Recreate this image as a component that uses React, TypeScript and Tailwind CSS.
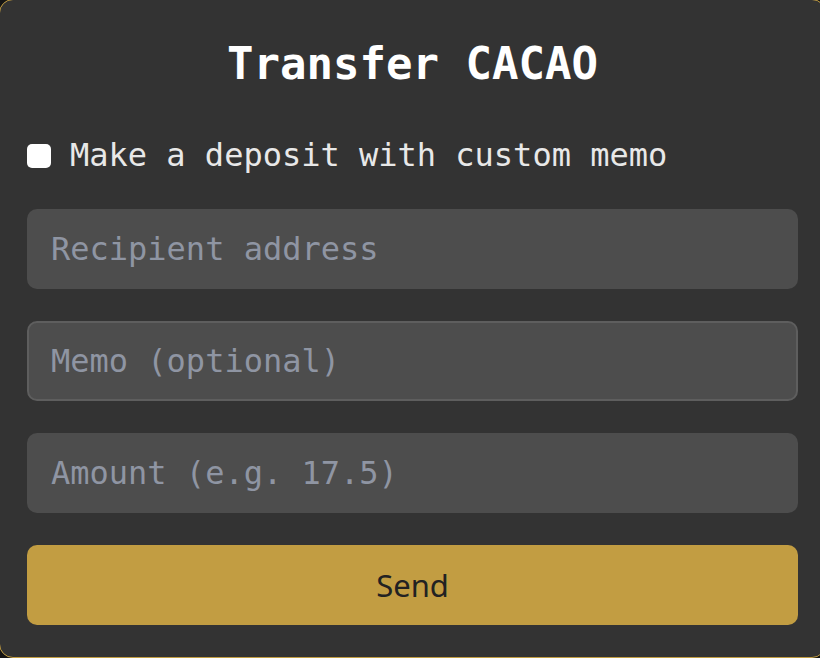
export default function App() {
  return (
    <div className="h-[658px] w-[820px] overflow-hidden bg-[#141414]">
      <div className="-ml-px -mt-px h-[659px] w-[827px] rounded-[14px] border border-[#c29d42] bg-[#333333] px-[27px] pt-[38px] font-['DejaVu_Sans_Mono',monospace]">
        <h1 className="text-center text-[44px] font-bold leading-[1.2] text-white">Transfer CACAO</h1>

        <label className="mt-[40px] flex h-[48px] items-center gap-[19px] text-[32px] text-[#e8e8e8]">
          <input type="checkbox" className="mt-[3px] h-6 w-6 shrink-0 appearance-none rounded-[5px] bg-white" />
          Make a deposit with custom memo
        </label>

        <div className="mt-[30px] flex flex-col gap-[32px]">
          <input
            placeholder="Recipient address"
            className="h-[80px] w-full rounded-[10px] border-2 border-transparent bg-[#4d4d4d] px-[22px] text-[32px] text-white outline-none placeholder:text-[#8f95a3]"
          />
          <input
            placeholder="Memo (optional)"
            className="h-[80px] w-full rounded-[10px] border-2 border-[#5e5e5e] bg-[#4d4d4d] px-[22px] text-[32px] text-white outline-none placeholder:text-[#8f95a3]"
          />
          <input
            placeholder="Amount (e.g. 17.5)"
            className="h-[80px] w-full rounded-[10px] border-2 border-transparent bg-[#4d4d4d] px-[22px] text-[32px] text-white outline-none placeholder:text-[#8f95a3]"
          />
          <button className="h-[80px] w-full rounded-[10px] bg-[#c29d42] font-['Noto_Sans',sans-serif] text-[31px] text-[#222222]">
            Send
          </button>
        </div>
      </div>
    </div>
  );
}
